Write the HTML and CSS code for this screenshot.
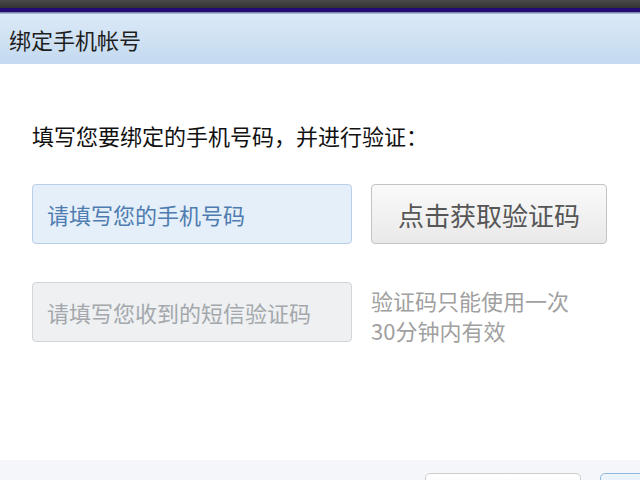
FILE: index.html
```html
<!DOCTYPE html>
<html lang="zh-CN">
<head>
<meta charset="utf-8">
<title>绑定手机帐号</title>
<link rel="stylesheet" href="styles.css">
</head>
<body>
<div class="page">
  <div class="topstrip">
    <div class="taskbar"></div>
    <div class="navy"></div>
    <div class="fade"></div>
  </div>
  <div class="titlebar">绑定手机帐号</div>
  <div class="content">
    <p class="intro">填写您要绑定的手机号码，并进行验证：</p>
    <div class="row">
      <input class="field phone" type="text" placeholder="请填写您的手机号码">
      <button class="getcode" type="button">点击获取验证码</button>
    </div>
    <div class="row">
      <input class="field code" type="text" placeholder="请填写您收到的短信验证码" disabled>
      <div class="hint">验证码只能使用一次<br>30分钟内有效</div>
    </div>
  </div>
  <div class="footer">
    <button class="btn cancel" type="button"></button>
    <button class="btn ok" type="button"></button>
  </div>
</div>
</body>
</html>
```
FILE: styles.css
```css
* { box-sizing: border-box; }
html, body { margin: 0; padding: 0; background: #ffffff; }
body {
  font-family: "Noto Sans CJK SC", "Liberation Sans", sans-serif;
  overflow: hidden;
}
.page {
  width: 640px;
  height: 480px;
  display: flex;
  flex-direction: column;
  overflow: hidden;
}
.topstrip { display: flex; flex-direction: column; flex: none; }
.taskbar { height: 8px; background: linear-gradient(#4a4a4a, #333333); }
.navy { height: 4px; background: #230a74; }
.fade { height: 2px; background: linear-gradient(#6f6f96, #bcd0e6); }
.titlebar {
  flex: none;
  height: 50px;
  padding-left: 9px;
  display: flex;
  align-items: center;
  font-size: 22px;
  color: #1e1e1e;
  background: linear-gradient(#dbe9f7, #c4daf0);
  border-bottom: 1px solid #c9dbee;
}
.content {
  flex: 1;
  padding: 56px 0 0 32px;
  display: flex;
  flex-direction: column;
}
.intro {
  margin: 0 0 34px 0;
  font-size: 22px;
  line-height: 30px;
  color: #111111;
}
.row {
  display: flex;
  align-items: flex-start;
  gap: 19px;
  margin-bottom: 38px;
}
.field {
  width: 320px;
  height: 60px;
  padding: 0 0 0 14px;
  font-family: inherit;
  font-size: 22px;
  border-radius: 4px;
  outline: none;
}
.phone {
  background: #e5effa;
  border: 1px solid #b9d0ea;
  color: #4d79ad;
}
.phone::placeholder { color: #4f7cb0; }
.code {
  background: #eef0f2;
  border: 1px solid #d2d5d8;
  color: #a2a6aa;
}
.code::placeholder { color: #a4a8ac; }
.getcode {
  width: 236px;
  height: 60px;
  font-family: inherit;
  font-size: 26px;
  color: #565656;
  background: linear-gradient(#fafafa, #e9e9e9);
  border: 1px solid #c3c3c3;
  border-radius: 4px;
  padding: 0;
}
.hint {
  padding-top: 3px;
  font-size: 22px;
  line-height: 30px;
  color: #a0a0a0;
}
.footer {
  flex: none;
  height: 20px;
  background: #f4f6f9;
  padding: 13px 0 0 425px;
  display: flex;
  gap: 19px;
  overflow: hidden;
}
.btn {
  flex: none;
  width: 156px;
  height: 40px;
  border-radius: 5px;
  padding: 0;
}
.cancel {
  background: linear-gradient(#ffffff, #f2f2f2);
  border: 1px solid #cdcdcd;
}
.ok {
  background: linear-gradient(#edf4fc, #dce9f7);
  border: 1px solid #93b8df;
}
```
